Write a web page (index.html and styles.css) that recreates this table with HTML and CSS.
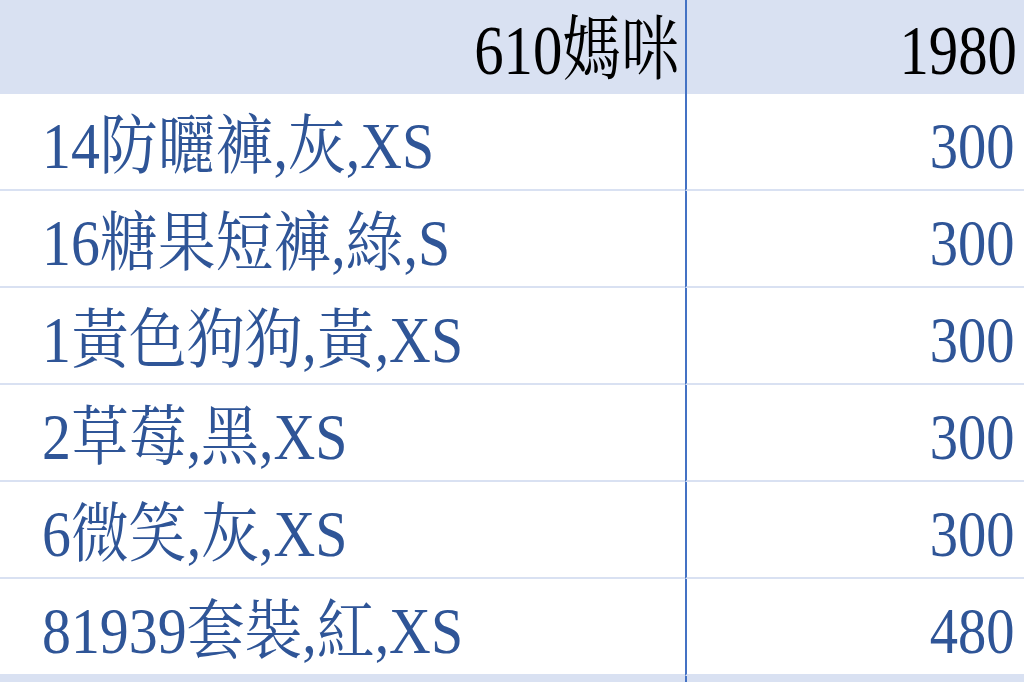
FILE: index.html
```html
<!DOCTYPE html>
<html lang="zh-Hant">
<head>
<meta charset="utf-8">
<title>610媽咪</title>
<link rel="stylesheet" href="styles.css">
</head>
<body>
<div class="sheet">
  <div class="row header">
    <div class="cell name"><span class="txt">610媽咪</span></div>
    <div class="cell qty"><span class="txt">1980</span></div>
  </div>
  <div class="row item">
    <div class="cell name"><span class="txt">14防曬褲,灰,XS</span></div>
    <div class="cell qty"><span class="txt">300</span></div>
  </div>
  <div class="row item">
    <div class="cell name"><span class="txt">16糖果短褲,綠,S</span></div>
    <div class="cell qty"><span class="txt">300</span></div>
  </div>
  <div class="row item">
    <div class="cell name"><span class="txt">1黃色狗狗,黃,XS</span></div>
    <div class="cell qty"><span class="txt">300</span></div>
  </div>
  <div class="row item">
    <div class="cell name"><span class="txt">2草莓,黑,XS</span></div>
    <div class="cell qty"><span class="txt">300</span></div>
  </div>
  <div class="row item">
    <div class="cell name"><span class="txt">6微笑,灰,XS</span></div>
    <div class="cell qty"><span class="txt">300</span></div>
  </div>
  <div class="row item">
    <div class="cell name"><span class="txt">81939套裝,紅,XS</span></div>
    <div class="cell qty"><span class="txt">480</span></div>
  </div>
  <div class="row tail">
    <div class="cell name"></div>
    <div class="cell qty"></div>
  </div>
</div>
</body>
</html>
```

FILE: styles.css
```css
html, body {
  margin: 0;
  padding: 0;
  background: #ffffff;
}

.sheet {
  width: 1024px;
  height: 682px;
  display: flex;
  flex-direction: column;
  overflow: hidden;
  font-family: "Liberation Serif", "Noto Serif CJK TC", "Noto Sans CJK TC", serif;
}

.row {
  display: grid;
  grid-template-columns: 685px 1fr;
  flex: none;
}

.cell {
  display: flex;
  align-items: center;
  box-sizing: border-box;
  min-width: 0;
}

.qty {
  border-left: 2px solid #4472c4;
  justify-content: flex-end;
}

.txt {
  display: inline-block;
  line-height: 1;
  white-space: nowrap;
}

/* header */
.header {
  height: 94px;
  background: #d9e1f2;
}

.header .cell {
  padding-top: 7px;
}

.header .txt {
  font-size: 70px;
  color: #000000;
  transform: scaleX(0.84);
  transform-origin: right center;
}

.header .name {
  justify-content: flex-end;
  padding-right: 5px;
}

.header .qty {
  padding-right: 7px;
}

/* data rows */
.item {
  height: 97px;
}

.item .cell {
  border-bottom: 2px solid #d9e1f2;
  padding-top: 10px;
}

.item .txt {
  font-size: 65px;
  color: #2f5597;
}

.item .name {
  padding-left: 42px;
}

.item .name .txt {
  transform: scaleX(0.89);
  transform-origin: left center;
}

.item .qty {
  padding-right: 10px;
}

.item .qty .txt {
  transform: scaleX(0.87);
  transform-origin: right center;
}

/* next row peeking in at the bottom */
.tail {
  flex: 1;
  background: #d9e1f2;
}
```
